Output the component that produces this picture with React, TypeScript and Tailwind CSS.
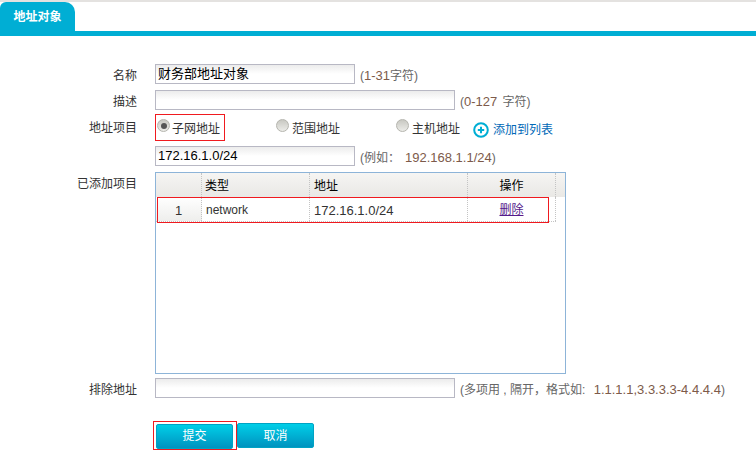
const font = { fontFamily: '"Liberation Sans", "Noto Sans CJK SC", sans-serif' };

const inputClass =
  "h-[20px] border border-[#b8b8c4] bg-gradient-to-b from-[#ececec] via-white to-white px-[2px] text-[13px] leading-[17px] text-black";

const Label = ({ text, top = "mt-[2px]" }: { text: string; top?: string }) => (
  <div className={`w-[137px] shrink-0 text-right text-[12px] leading-[20px] text-[#333] ${top}`}>{text}</div>
);

const Hint = ({ children }: { children: React.ReactNode }) => (
  <span className="ml-[5px] mt-[2px] text-[12px] leading-[20px] text-[#666]">{children}</span>
);

const Num = ({ children }: { children: React.ReactNode }) => (
  <span className="text-[13px] text-[#7d5a4a]">{children}</span>
);

const Radio = ({ checked }: { checked?: boolean }) => (
  <span className="mt-[5px] flex h-[13px] w-[13px] items-center justify-center rounded-full border border-[#b5b5ae] bg-gradient-to-b from-[#c8c8c2] to-[#ecece8]">
    {checked && <span className="h-[6px] w-[6px] rounded-full bg-[#555]" />}
  </span>
);

const App = () => {
  return (
    <div className="h-[471px] w-[756px] overflow-hidden bg-white" style={font}>
      {/* Tabs */}
      <div className="h-[2px] bg-[#e4e2e0]" />
      <div className="h-[34px] border-b-[5px] border-[#00aed4]">
        <div className="flex h-[29px] w-[75px] items-center justify-center rounded-tr-[10px] rounded-tl-[6px] bg-[#00aed4] text-[12px] font-bold text-white">
          地址对象
        </div>
      </div>

      {/* Form */}
      <div className="flex flex-col pt-[28px]">
        <div className="flex h-[20px] items-start">
          <Label text="名称" />
          <div className={`ml-[18px] w-[200px] ${inputClass}`}>财务部地址对象</div>
          <Hint>
            (<Num>1-31</Num>字符)
          </Hint>
        </div>

        <div className="mt-[6px] flex h-[20px] items-start">
          <Label text="描述" />
          <div className={`ml-[18px] w-[300px] ${inputClass}`} />
          <Hint>
            (<Num>0-127</Num> <span className="ml-[2px]">字符)</span>
          </Hint>
        </div>

        <div className="mt-[4px] flex h-[32px] items-start">
          <Label text="地址项目" top="mt-[4px]" />
          <div className="relative ml-[18px] flex h-[32px] w-[445px] items-start text-[12px] leading-[20px] text-[#333]">
            <div className="flex w-[121px] items-start gap-[2px] pl-[2px]">
              <Radio checked />
              <span className="mt-[5px]">子网地址</span>
            </div>
            <div className="flex w-[120px] items-start gap-[3px]">
              <Radio />
              <span className="mt-[5px]">范围地址</span>
            </div>
            <div className="flex w-[77px] items-start gap-[3px]">
              <Radio />
              <span className="mt-[5px]">主机地址</span>
            </div>
            <div className="flex items-start gap-[4px] text-[#0068b7]">
              <svg className="mt-[8px]" width="16" height="16" viewBox="0 0 16 16">
                <circle cx="8" cy="8" r="6.8" fill="white" stroke="#00aed4" strokeWidth="2" />
                <path d="M4.8 8h6.4M8 4.8v6.4" stroke="#00aed4" strokeWidth="2" />
              </svg>
              <span className="mt-[6px]">添加到列表</span>
            </div>
            <div className="absolute left-0 top-0 h-[27px] w-[70px] border border-[#f01a1f]" />
          </div>
        </div>

        <div className="flex h-[20px] items-start">
          <Label text="" />
          <div className={`ml-[18px] w-[200px] ${inputClass}`}>172.16.1.0/24</div>
          <Hint>
            (例如：<span className="ml-[5px]"><Num>192.168.1.1/24</Num></span>)
          </Hint>
        </div>

        <div className="mt-[6px] flex items-start">
          <Label text="已添加项目" />
          <div className="relative ml-[18px] h-[202px] w-[411px] border border-[#8db4d8]">
            <div className="flex h-[24px] bg-gradient-to-b from-[#f6f5f3] to-[#e9e8e5] text-[12px] leading-[26px] text-black">
              <div className="w-[46px] border-r border-dotted border-[#c4c4c4]" />
              <div className="w-[108px] border-r border-dotted border-[#c4c4c4] pl-[3px]">类型</div>
              <div className="w-[158px] border-r border-dotted border-[#c4c4c4] pl-[4px]">地址</div>
              <div className="w-[88px] border-r border-dotted border-[#c4c4c4] text-center">操作</div>
            </div>
            <div className="flex h-[25px] w-[400px] border-b border-dotted border-[#c4c4c4] text-[12px] leading-[27px] text-[#333]">
              <div className="w-[46px] border-r border-dotted border-[#c4c4c4] bg-gradient-to-b from-white to-[#eeeeec] text-center text-[13px]">1</div>
              <div className="w-[108px] border-r border-dotted border-[#c4c4c4] pl-[4px]">network</div>
              <div className="w-[158px] border-r border-dotted border-[#c4c4c4] pl-[4px] text-[13px]">172.16.1.0/24</div>
              <div className="w-[88px] border-r border-dotted border-[#c4c4c4] text-center text-[#551a8b] underline">删除</div>
            </div>
            <div className="absolute left-[1px] top-[24px] h-[26px] w-[392px] border border-[#f01a1f]" />
          </div>
        </div>

        <div className="mt-[4px] flex h-[20px] items-start">
          <Label text="排除地址" />
          <div className={`ml-[18px] w-[300px] ${inputClass}`} />
          <Hint>
            (多项用 , 隔开，格式如: <span className="ml-[5px]"><Num>1.1.1.1,3.3.3.3-4.4.4.4</Num></span>)
          </Hint>
        </div>

        <div className="ml-[156px] mt-[25px] flex gap-[4px]">
          <div className="relative">
            <button className="h-[25px] w-[77px] rounded-[2px] border border-[#00a3c4] bg-gradient-to-b from-[#00cfe8] to-[#0093bf] text-[12px] text-white">
              提交
            </button>
            <div className="absolute left-[-3px] top-[-2px] h-[29px] w-[84px] border border-[#f01a1f]" />
          </div>
          <button className="h-[25px] w-[77px] rounded-[2px] border border-[#00a3c4] bg-gradient-to-b from-[#00cfe8] to-[#0093bf] text-[12px] text-white">
            取消
          </button>
        </div>
      </div>
    </div>
  );
};

export default App;
